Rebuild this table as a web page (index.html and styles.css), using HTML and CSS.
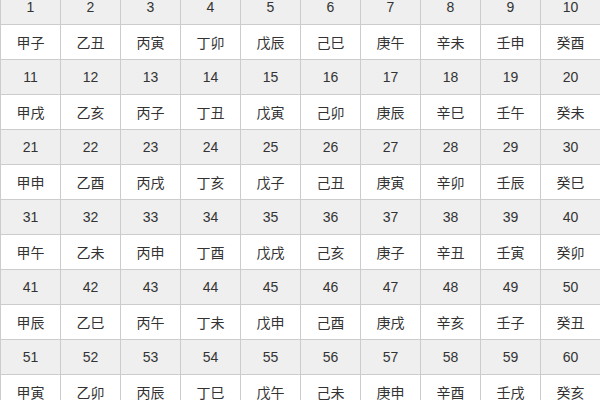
FILE: index.html
```html
<!DOCTYPE html>
<html>
<head>
<meta charset="utf-8">
<link rel="stylesheet" href="styles.css">
</head>
<body>
<div class="wrap">
<table class="cycle">
<tbody id="tb">
<tr class="num"><td>1</td><td>2</td><td>3</td><td>4</td><td>5</td><td>6</td><td>7</td><td>8</td><td>9</td><td>10</td></tr>
<tr class="gz"><td>甲子</td><td>乙丑</td><td>丙寅</td><td>丁卯</td><td>戊辰</td><td>己巳</td><td>庚午</td><td>辛未</td><td>壬申</td><td>癸酉</td></tr>
<tr class="num"><td>11</td><td>12</td><td>13</td><td>14</td><td>15</td><td>16</td><td>17</td><td>18</td><td>19</td><td>20</td></tr>
<tr class="gz"><td>甲戌</td><td>乙亥</td><td>丙子</td><td>丁丑</td><td>戊寅</td><td>己卯</td><td>庚辰</td><td>辛巳</td><td>壬午</td><td>癸未</td></tr>
<tr class="num"><td>21</td><td>22</td><td>23</td><td>24</td><td>25</td><td>26</td><td>27</td><td>28</td><td>29</td><td>30</td></tr>
<tr class="gz"><td>甲申</td><td>乙酉</td><td>丙戌</td><td>丁亥</td><td>戊子</td><td>己丑</td><td>庚寅</td><td>辛卯</td><td>壬辰</td><td>癸巳</td></tr>
<tr class="num"><td>31</td><td>32</td><td>33</td><td>34</td><td>35</td><td>36</td><td>37</td><td>38</td><td>39</td><td>40</td></tr>
<tr class="gz"><td>甲午</td><td>乙未</td><td>丙申</td><td>丁酉</td><td>戊戌</td><td>己亥</td><td>庚子</td><td>辛丑</td><td>壬寅</td><td>癸卯</td></tr>
<tr class="num"><td>41</td><td>42</td><td>43</td><td>44</td><td>45</td><td>46</td><td>47</td><td>48</td><td>49</td><td>50</td></tr>
<tr class="gz"><td>甲辰</td><td>乙巳</td><td>丙午</td><td>丁未</td><td>戊申</td><td>己酉</td><td>庚戌</td><td>辛亥</td><td>壬子</td><td>癸丑</td></tr>
<tr class="num"><td>51</td><td>52</td><td>53</td><td>54</td><td>55</td><td>56</td><td>57</td><td>58</td><td>59</td><td>60</td></tr>
<tr class="gz"><td>甲寅</td><td>乙卯</td><td>丙辰</td><td>丁巳</td><td>戊午</td><td>己未</td><td>庚申</td><td>辛酉</td><td>壬戌</td><td>癸亥</td></tr>
</tbody>
</table>
</div>
</body>
</html>
```
FILE: styles.css
```css
html, body {
  margin: 0;
  padding: 0;
  background: #ffffff;
  overflow: hidden;
}
.wrap {
  width: 600px;
  height: 400px;
  overflow: hidden;
}
.cycle {
  margin-top: -11px;
  width: 601px;
  border-collapse: collapse;
  table-layout: fixed;
  font-family: "Liberation Sans", "Noto Sans CJK SC", sans-serif;
  font-size: 14px;
  color: #333333;
}
.cycle td {
  border: 1px solid #cccccc;
  height: 34px;
  padding: 0;
  text-align: center;
  vertical-align: middle;
}
.num td {
  background: #efefef;
}
.gz td {
  background: #ffffff;
}
```
